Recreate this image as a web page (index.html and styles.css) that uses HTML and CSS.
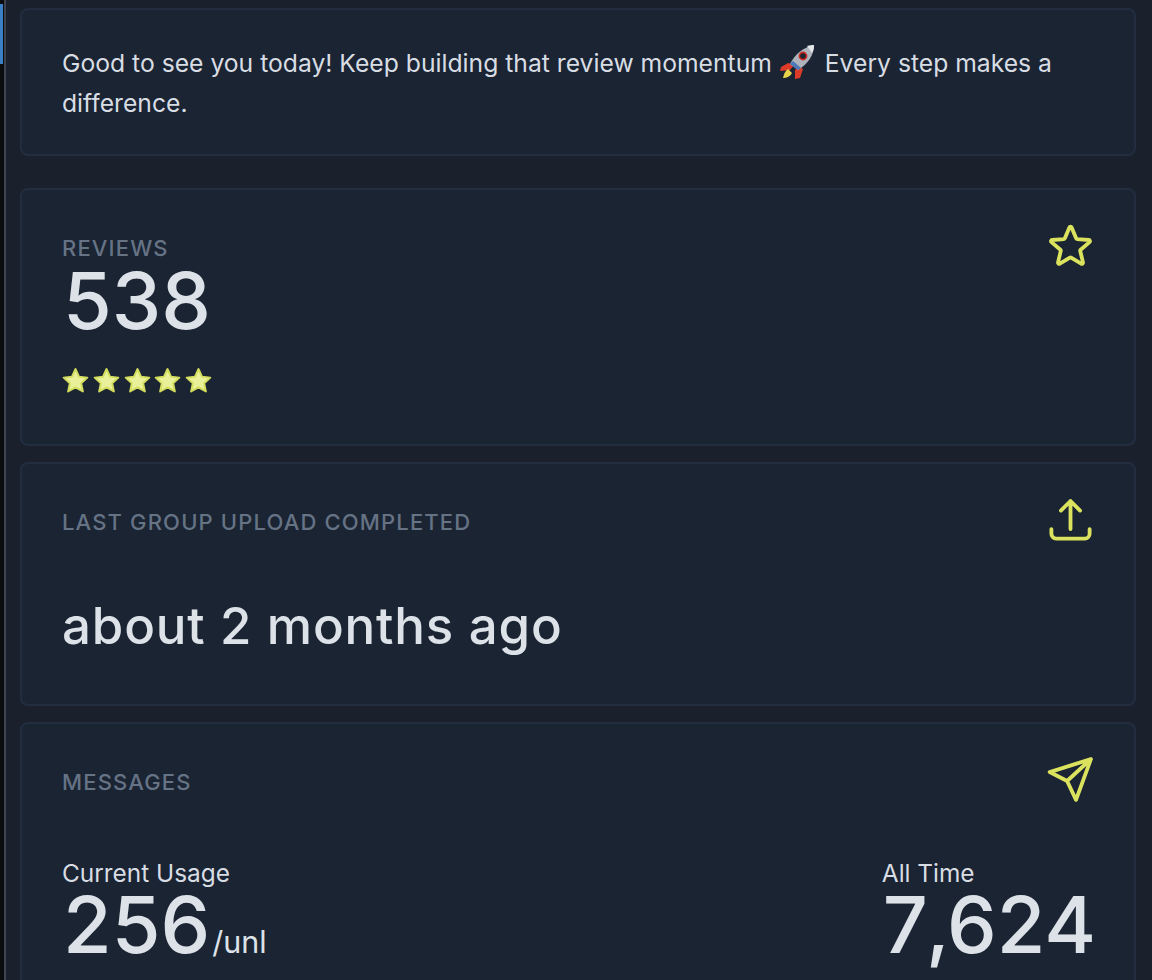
FILE: index.html
```html
<!DOCTYPE html>
<html lang="en">
<head>
<meta charset="utf-8">
<title>Dashboard</title>
<link rel="stylesheet" href="styles.css">
</head>
<body>
<div class="app">
  <aside class="strip"><div class="strip-blue"></div></aside>
  <main class="main">
    <section class="card card-greeting">
      <p class="greeting">Good to see you today! Keep building that review momentum
        <svg class="rocket" viewBox="0 0 36 36" aria-hidden="true">
          <path d="M9 19l-7 4-1 4 10-1 4-5z" fill="#dd3b2a"/>
          <path d="M24 25l-3 9-5 1 0-9 4-4z" fill="#dd3b2a"/>
          <path d="M9 25c-3 2-4 5-5 9 3 0 7-1 9-5z" fill="#e8d24a"/>
          <path d="M11 20C16 10 25 3 35 1c0 10-6 19-16 25z" fill="#aeb2ba"/>
          <path d="M11 20l8 6 3-2-8-7z" fill="#4a78b8"/>
          <path d="M28 2c3-1 5-1 7-1 0 2 0 5-2 8z" fill="#e4e6ea"/>
          <circle cx="24" cy="12" r="4.4" fill="#c92a20"/>
          <circle cx="24" cy="12" r="2.8" fill="#20242c"/>
        </svg>
        Every step makes a difference.</p>
    </section>

    <section class="card card-reviews">
      <div class="card-body">
        <h2 class="label">REVIEWS</h2>
        <div class="big big-reviews">538</div>
        <div class="stars">
          <svg class="mini" viewBox="0 0 24 24"><path d="M12 2.5l2.9 6.3 6.9.8-5.1 4.7 1.4 6.8-6.1-3.4-6.1 3.4 1.4-6.8-5.1-4.7 6.9-.8z"/></svg>
          <svg class="mini" viewBox="0 0 24 24"><path d="M12 2.5l2.9 6.3 6.9.8-5.1 4.7 1.4 6.8-6.1-3.4-6.1 3.4 1.4-6.8-5.1-4.7 6.9-.8z"/></svg>
          <svg class="mini" viewBox="0 0 24 24"><path d="M12 2.5l2.9 6.3 6.9.8-5.1 4.7 1.4 6.8-6.1-3.4-6.1 3.4 1.4-6.8-5.1-4.7 6.9-.8z"/></svg>
          <svg class="mini" viewBox="0 0 24 24"><path d="M12 2.5l2.9 6.3 6.9.8-5.1 4.7 1.4 6.8-6.1-3.4-6.1 3.4 1.4-6.8-5.1-4.7 6.9-.8z"/></svg>
          <svg class="mini" viewBox="0 0 24 24"><path d="M12 2.5l2.9 6.3 6.9.8-5.1 4.7 1.4 6.8-6.1-3.4-6.1 3.4 1.4-6.8-5.1-4.7 6.9-.8z"/></svg>
        </div>
      </div>
      <svg class="icon" viewBox="0 0 24 24"><path d="M11.48 3.5a.56.56 0 0 1 1.04 0l2.13 5.11a.56.56 0 0 0 .47.35l5.52.44c.5.04.7.66.32.99l-4.2 3.6a.56.56 0 0 0-.18.56l1.28 5.38a.56.56 0 0 1-.84.61l-4.73-2.88a.56.56 0 0 0-.58 0l-4.73 2.88a.56.56 0 0 1-.84-.61l1.28-5.38a.56.56 0 0 0-.18-.56l-4.2-3.6a.56.56 0 0 1 .32-.99l5.52-.44a.56.56 0 0 0 .47-.35z"/></svg>
    </section>

    <section class="card card-upload">
      <div class="card-body">
        <h2 class="label">LAST GROUP UPLOAD COMPLETED</h2>
        <div class="when">about 2 months ago</div>
      </div>
      <svg class="icon" viewBox="0 0 24 24"><path d="M3 16.5v2.25A2.25 2.25 0 0 0 5.25 21h13.5A2.25 2.25 0 0 0 21 18.75V16.5m-13.5-8.7L12 3.3m0 0l4.5 4.5M12 3.3v13.2"/></svg>
    </section>

    <section class="card card-messages">
      <div class="messages-head">
        <div class="card-body"><h2 class="label">MESSAGES</h2></div>
        <svg class="icon" viewBox="0 0 24 24"><path d="M2.2 8.5L21.6 2.4 14.6 21.6 10.4 12.7zM10.4 12.7L21.6 2.4"/></svg>
      </div>
      <div class="stats">
        <div class="stat">
          <div class="stat-label">Current Usage</div>
          <div class="big">256<span class="unit">/unl</span></div>
        </div>
        <div class="stat">
          <div class="stat-label">All Time</div>
          <div class="big">7<span class="comma">,</span>624</div>
        </div>
      </div>
    </section>
  </main>
</div>
</body>
</html>
```
FILE: styles.css
```css
* { box-sizing: border-box; }
html, body { margin: 0; height: 100%; }
body {
  background: #1a202c;
  color: #dde2e8;
  font-family: Inter, "Liberation Sans", sans-serif;
  overflow: hidden;
}
.app { display: flex; height: 980px; overflow: hidden; }
.strip {
  width: 6px;
  flex: none;
  background: #0b0c0e;
  border-right: 2px solid #3d4350;
  padding-top: 4px;
}
.strip-blue { height: 60px; width: 3px; background: #3b7fc4; }
.main {
  flex: 1;
  padding: 8px 16px 0 14px;
  display: flex;
  flex-direction: column;
}
.card {
  background: #1a2433;
  border: 2px solid #222e40;
  border-radius: 8px;
  flex: none;
  padding: 30px 38px 0 40px;
}
.card-greeting { height: 148px; margin-bottom: 32px; padding-top: 33px; }
.card-reviews { height: 258px; display: flex; justify-content: space-between; margin-bottom: 16px; }
.card-upload { height: 244px; display: flex; justify-content: space-between; margin-bottom: 16px; }
.card-messages { height: 270px; }
.card-body { padding-top: 14px; }
.greeting {
  margin: 0;
  font-size: 24.7px;
  line-height: 40px;
  color: #d8dde3;
}
.rocket { width: 36px; height: 36px; vertical-align: -8px; margin: 0 3px 0 0; }
.label {
  margin: 0;
  font-size: 22px;
  line-height: 28px;
  font-weight: 500;
  letter-spacing: 1.15px;
  color: #667385;
}
.big {
  font-size: 79px;
  line-height: 72px;
  font-weight: 500;
  color: #dde2e8;
  margin-left: 1px;
}
.big-reviews { margin-top: 2px; }
.comma { margin: 0 -3px 0 -2px; }
.stars { display: flex; gap: 1.75px; margin-top: 30px; margin-left: -1px; }
.mini { width: 29px; height: 29px; fill: #e8f09a; stroke: #d4dd5c; stroke-width: 1.6; stroke-linejoin: round; }
.icon {
  width: 51px;
  height: 51px;
  flex: none;
  fill: none;
  stroke: #dbe35e;
  stroke-width: 1.8;
  stroke-linecap: round;
  stroke-linejoin: round;
}
.when {
  margin-top: 54px;
  font-size: 51px;
  letter-spacing: .85px;
  line-height: 72px;
  font-weight: 500;
  color: #dde2e8;
}
.messages-head { display: flex; justify-content: space-between; align-items: flex-start; }
.stats { display: flex; justify-content: space-between; margin-top: 52px; }
.stat-label { font-size: 24.4px; line-height: 32px; color: #d8dde3; }
.stat .big { margin-top: -1px; }
.unit { font-size: 30.5px; font-weight: 400; margin-left: 2px; }
```
